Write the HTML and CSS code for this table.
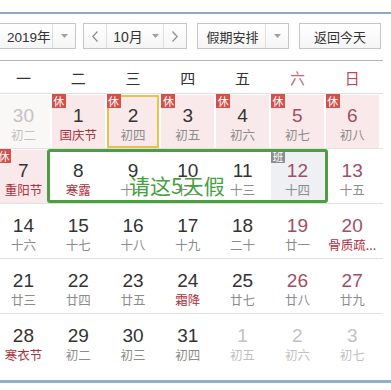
FILE: index.html
```html
<!DOCTYPE html>
<html lang="zh-CN">
<head>
<meta charset="utf-8">
<title>万年历</title>
<link rel="stylesheet" href="styles.css">
</head>
<body>
<div class="topline"></div>
<div class="toolbar">
  <div class="ctl sel year">
    <span class="val">2019年</span>
    <span class="arr"><svg width="7" height="4" viewBox="0 0 7 4"><path d="M0 0h7L3.5 4z" fill="#a0a0a0"/></svg></span>
  </div>
  <div class="ctl month">
    <span class="nav"><svg width="6" height="11" viewBox="0 0 6 11"><path d="M5.5 0.5L0.8 5.5l4.7 5" fill="none" stroke="#8a8a8a" stroke-width="1.2"/></svg></span>
    <span class="mid"><span class="mval">10月</span><svg width="7" height="4" viewBox="0 0 7 4"><path d="M0 0h7L3.5 4z" fill="#a0a0a0"/></svg></span>
    <span class="nav right"><svg width="6" height="11" viewBox="0 0 6 11"><path d="M0.5 0.5l4.7 5-4.7 5" fill="none" stroke="#8a8a8a" stroke-width="1.2"/></svg></span>
  </div>
  <div class="ctl sel hol-sel">
    <span class="val">假期安排</span>
    <span class="arr"><svg width="7" height="4" viewBox="0 0 7 4"><path d="M0 0h7L3.5 4z" fill="#a0a0a0"/></svg></span>
  </div>
  <div class="ctl btn">返回今天</div>
</div>

<div class="cal">
  <div class="weekdays">
    <span>一</span><span>二</span><span>三</span><span>四</span><span>五</span><span class="sat">六</span><span class="sun">日</span>
  </div>

  <div class="week">
    <div class="cell other prev"><span class="num">30</span><span class="lun">初二</span></div>
    <div class="cell hol"><i class="badge">休</i><span class="num">1</span><span class="lun fest">国庆节</span></div>
    <div class="cell hol today"><i class="badge">休</i><span class="num">2</span><span class="lun">初四</span></div>
    <div class="cell hol"><i class="badge">休</i><span class="num">3</span><span class="lun">初五</span></div>
    <div class="cell hol"><i class="badge">休</i><span class="num">4</span><span class="lun">初六</span></div>
    <div class="cell hol wk"><i class="badge">休</i><span class="num">5</span><span class="lun">初七</span></div>
    <div class="cell hol wk"><i class="badge">休</i><span class="num">6</span><span class="lun">初八</span></div>
  </div>

  <div class="week annotated">
    <div class="cell hol"><i class="badge">休</i><span class="num">7</span><span class="lun fest">重阳节</span></div>
    <div class="cell"><span class="num">8</span><span class="lun fest">寒露</span></div>
    <div class="cell"><span class="num">9</span><span class="lun">十一</span></div>
    <div class="cell"><span class="num">10</span><span class="lun">十二</span></div>
    <div class="cell"><span class="num">11</span><span class="lun">十三</span></div>
    <div class="cell work wk"><i class="badge ban">班</i><span class="num">12</span><span class="lun">十四</span></div>
    <div class="cell wk"><span class="num">13</span><span class="lun">十五</span></div>
    <div class="note"><span class="note-text">请这5天假</span></div>
  </div>

  <div class="week">
    <div class="cell"><span class="num">14</span><span class="lun">十六</span></div>
    <div class="cell"><span class="num">15</span><span class="lun">十七</span></div>
    <div class="cell"><span class="num">16</span><span class="lun">十八</span></div>
    <div class="cell"><span class="num">17</span><span class="lun">十九</span></div>
    <div class="cell"><span class="num">18</span><span class="lun">二十</span></div>
    <div class="cell wk"><span class="num">19</span><span class="lun">廿一</span></div>
    <div class="cell wk"><span class="num">20</span><span class="lun fest">骨质疏...</span></div>
  </div>

  <div class="week">
    <div class="cell"><span class="num">21</span><span class="lun">廿三</span></div>
    <div class="cell"><span class="num">22</span><span class="lun">廿四</span></div>
    <div class="cell"><span class="num">23</span><span class="lun">廿五</span></div>
    <div class="cell"><span class="num">24</span><span class="lun fest">霜降</span></div>
    <div class="cell"><span class="num">25</span><span class="lun">廿七</span></div>
    <div class="cell wk"><span class="num">26</span><span class="lun">廿八</span></div>
    <div class="cell wk"><span class="num">27</span><span class="lun">廿九</span></div>
  </div>

  <div class="week last">
    <div class="cell"><span class="num">28</span><span class="lun fest">寒衣节</span></div>
    <div class="cell"><span class="num">29</span><span class="lun">初二</span></div>
    <div class="cell"><span class="num">30</span><span class="lun">初三</span></div>
    <div class="cell"><span class="num">31</span><span class="lun">初四</span></div>
    <div class="cell other"><span class="num">1</span><span class="lun">初五</span></div>
    <div class="cell other"><span class="num">2</span><span class="lun">初六</span></div>
    <div class="cell other"><span class="num">3</span><span class="lun">初七</span></div>
  </div>
</div>
<div class="bottomline"></div>
</body>
</html>
```
FILE: styles.css
```css
html, body {
  margin: 0;
  padding: 0;
  background: #fff;
}
body {
  width: 391px;
  height: 390px;
  overflow: hidden;
  font-family: "Liberation Sans", "Noto Sans CJK SC", sans-serif;
  color: #333;
}
.topline {
  margin-top: 12px;
  height: 2px;
  background: #8eabc2;
}
.toolbar {
  display: flex;
  align-items: stretch;
  height: 26px;
  margin-top: 9px;
  margin-left: -6px;
}
.ctl {
  box-sizing: border-box;
  height: 26px;
  border: 1px solid #c6c6c6;
  background: linear-gradient(#ffffff, #f5f5f5);
  display: flex;
  align-items: center;
  font-size: 13px;
  font-family: "Noto Sans CJK SC", "Liberation Sans", sans-serif;
  color: #333;
  white-space: nowrap;
}
.ctl .val {
  flex: 1;
  display: flex;
  align-items: center;
  height: 100%;
  border-right: 1px solid #dedede;
}
.ctl .arr {
  width: 22px;
  flex: none;
  display: flex;
  align-items: center;
  justify-content: center;
}
.year {
  width: 82px;
}
.year .val {
  padding-left: 12px;
  font-family: "Liberation Sans", "Noto Sans CJK SC", sans-serif;
  font-size: 13.5px;
}
.month {
  width: 104px;
  margin-left: 7px;
}
.month .nav {
  width: 22px;
  height: 100%;
  display: flex;
  align-items: center;
  justify-content: center;
  border-right: 1px solid #dedede;
}
.month .nav.right {
  border-right: none;
  border-left: 1px solid #dedede;
}
.month .mid {
  flex: 1;
  display: flex;
  align-items: center;
  justify-content: center;
  gap: 9px;
  padding-left: 2px;
}
.mval {
  font-family: "Liberation Sans", "Noto Sans CJK SC", sans-serif;
  font-size: 14px;
}
.hol-sel {
  width: 92px;
  margin-left: 10px;
}
.hol-sel .val {
  justify-content: center;
  padding-left: 2px;
}
.btn {
  width: 82px;
  margin-left: 10px;
  justify-content: center;
}

.cal {
  margin-left: -3px;
  width: 386px;
  margin-top: 11px;
}
.weekdays {
  display: grid;
  grid-template-columns: repeat(7, 52.8px);
  column-gap: 2px;
  height: 32px;
  align-items: center;
  border-top: 1px solid #b6b6b6;
  border-bottom: 1px solid #e0e0e0;
  font-family: "Noto Sans CJK SC", sans-serif;
  font-size: 15px;
  color: #333;
}
.weekdays span {
  text-align: center;
}
.weekdays .sat {
  color: #cc6a78;
}
.weekdays .sun {
  color: #c8424f;
}
.week {
  position: relative;
  display: grid;
  grid-template-columns: repeat(7, 52.8px);
  column-gap: 2px;
  padding-top: 1px;
  border-bottom: 1px solid #e0e0e0;
}
.week.last {
  border-bottom: none;
}
.cell {
  position: relative;
  height: 53px;
  box-sizing: border-box;
  padding-top: 10px;
  display: flex;
  flex-direction: column;
  align-items: center;
}
.num {
  font-size: 19px;
  line-height: 21px;
  color: #333;
}
.lun {
  font-family: "Noto Sans CJK SC", sans-serif;
  font-size: 12.5px;
  line-height: 17px;
  color: #8c8c8c;
  white-space: nowrap;
}
.lun.fest {
  color: #b02f3e;
}
.wk .num {
  color: #a24e62;
}
.other .num,
.other .lun {
  color: #c2c2c2;
}
.prev {
  background: #faf7f7;
}
.hol {
  background: #fae9ea;
}
.work {
  background: #eef0f4;
}
.today {
  box-shadow: inset 0 0 0 2px #e6c34d;
}
.badge {
  position: absolute;
  top: -1px;
  left: 0;
  width: 14px;
  height: 14px;
  background: #d4504b;
  color: #fff;
  font-style: normal;
  font-family: "Noto Sans CJK SC", sans-serif;
  font-size: 11px;
  line-height: 14px;
  text-align: center;
}
.badge.ban {
  background: #8c8c8c;
}
.note {
  position: absolute;
  left: 50px;
  top: 0;
  width: 281px;
  height: 54px;
  box-sizing: border-box;
  border: 3px solid #4c9f40;
  border-radius: 3px;
}
.note-text {
  position: absolute;
  left: 79px;
  top: 22px;
  font-family: "Noto Sans CJK SC", sans-serif;
  font-size: 21px;
  line-height: 23px;
  color: #45a03d;
  white-space: nowrap;
}
.bottomline {
  margin-top: 12px;
  height: 3px;
  background: #8fb0c8;
}
```
